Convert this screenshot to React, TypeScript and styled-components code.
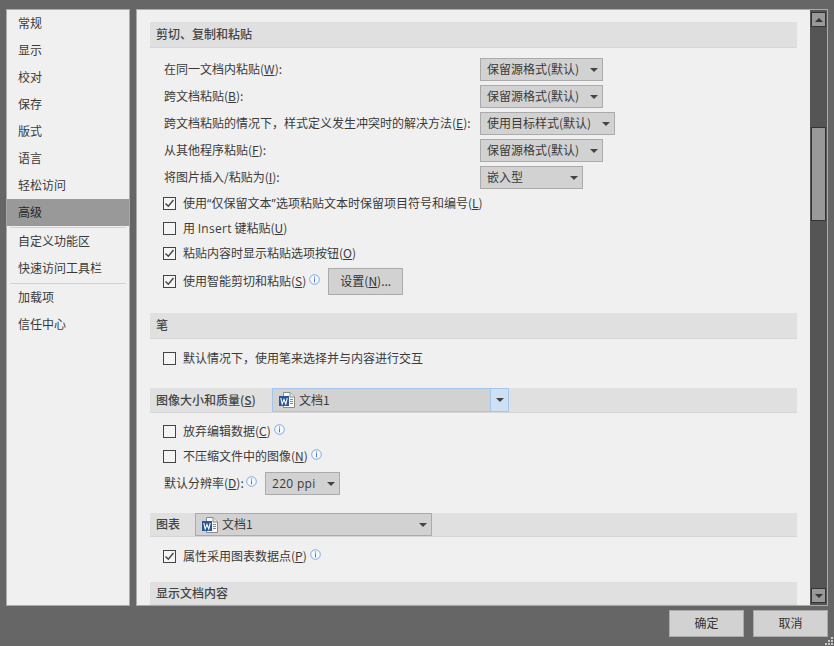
import styled, { createGlobalStyle } from 'styled-components';

const GlobalStyle = createGlobalStyle`
  html, body {
    margin: 0;
    padding: 0;
    background: #666666;
  }
  body {
    font-family: "Noto Sans CJK SC", "Liberation Sans", sans-serif;
    font-size: 12px;
    color: #3a3a3a;
  }
`;

const Dialog = styled.div`
  position: relative;
  width: 834px;
  height: 646px;
  box-sizing: border-box;
  padding: 9px 6px 0;
  background: #666666;
  overflow: hidden;
`;

const Body = styled.div`
  display: flex;
  gap: 6px;
  height: 597px;
`;

const Sidebar = styled.nav`
  width: 124px;
  box-sizing: border-box;
  background: #f0f0f0;
  border: 1px solid #ababab;
`;

const NavItem = styled.div<{ $active?: boolean }>`
  height: 27px;
  line-height: 25px;
  padding-left: 11px;
  background: ${p => (p.$active ? '#999999' : 'transparent')};
  color: ${p => (p.$active ? '#262626' : '#3a3a3a')};
`;

const NavDivider = styled.div`
  height: 1px;
  margin: 1px 3px 0;
  background: #d0d0d0;
`;

const Panel = styled.div`
  flex: 1;
  display: flex;
  box-sizing: border-box;
  background: #f0f0f0;
  border: 1px solid #ababab;
  overflow: hidden;
`;

const Content = styled.div`
  flex: 1;
  padding: 12px 13px 0;
  overflow: hidden;
`;

const SectionHeader = styled.div<{ $top?: number; $height?: number }>`
  display: flex;
  align-items: center;
  height: ${p => p.$height ?? 26}px;
  box-sizing: border-box;
  margin-top: ${p => p.$top ?? 0}px;
  padding-left: 6px;
  background: #e0e0e0;
  border-bottom: 1px solid #d6d6d6;
  font-weight: 500;
  color: #444444;
`;

const HeaderLabel = styled.span<{ $width?: number }>`
  width: ${p => (p.$width ? `${p.$width}px` : 'auto')};
  flex: none;
  padding-bottom: 2px;
`;

const FieldStack = styled.div`
  display: flex;
  flex-direction: column;
  gap: 4px;
  margin-top: 10px;
  padding-left: 14px;
`;

const FieldRow = styled.div`
  display: flex;
  align-items: center;
  height: 23px;
`;

const FieldLabel = styled.span<{ $width?: number }>`
  width: ${p => (p.$width ? `${p.$width}px` : 'auto')};
  flex: none;
  padding-bottom: 2px;
  white-space: nowrap;
`;

const Combo = styled.div<{ $width: number; $tall?: boolean; $active?: boolean; $left?: number }>`
  display: flex;
  align-items: center;
  justify-content: space-between;
  width: ${p => p.$width}px;
  height: ${p => (p.$tall ? '100%' : '23px')};
  box-sizing: border-box;
  flex: none;
  margin-left: ${p => p.$left ?? 0}px;
  padding: 0 ${p => (p.$active ? '0' : '4px')} 0 6px;
  background: #d2d2d2;
  border: 1px solid ${p => (p.$active ? '#a3c6ea' : '#ababab')};
  font-weight: 400;
  color: #3a3a3a;
  white-space: nowrap;
`;

const ComboText = styled.span`
  padding-bottom: 2px;
`;

const ComboValue = styled.span`
  display: flex;
  align-items: center;
  gap: 4px;
`;

const Latin = styled.span`
  font-family: "Open Sans", "Liberation Sans", sans-serif;
  letter-spacing: 0.3px;
`;

const Arrow = styled.span`
  width: 0;
  height: 0;
  border-left: 4px solid transparent;
  border-right: 4px solid transparent;
  border-top: 4px solid #444444;
`;

const ArrowButton = styled.span`
  display: flex;
  align-items: center;
  justify-content: center;
  align-self: stretch;
  width: 17px;
  background: #cde0f4;
  border-left: 1px solid #a3c6ea;
`;

const CheckRow = styled.div<{ $top?: number; $height?: number }>`
  display: flex;
  align-items: center;
  gap: 7px;
  height: ${p => p.$height ?? 25}px;
  margin-top: ${p => p.$top ?? 0}px;
  padding-left: 13px;
  white-space: nowrap;
`;

const CheckText = styled.span`
  padding-bottom: 2px;
`;

const Box = styled.span`
  display: flex;
  align-items: center;
  justify-content: center;
  width: 13px;
  height: 13px;
  box-sizing: border-box;
  flex: none;
  background: #f5f5f5;
  border: 1px solid #444444;
`;

const Info = styled.svg`
  flex: none;
  width: 11px;
  height: 11px;
  margin: -5px 0 0 -4px;
`;

const PushButton = styled.button<{ $left?: number }>`
  width: 75px;
  height: 27px;
  box-sizing: border-box;
  margin: 0 0 0 ${p => p.$left ?? 0}px;
  padding: 0 0 2px;
  background: #d2d2d2;
  border: 1px solid #ababab;
  font: inherit;
  color: #333333;
`;

const Resolution = styled.div`
  display: flex;
  align-items: center;
  height: 23px;
  margin-top: 3px;
  padding-left: 14px;
  white-space: nowrap;
`;

const ScrollBar = styled.div`
  display: flex;
  flex-direction: column;
  align-items: center;
  width: 17px;
  box-sizing: border-box;
  padding: 2px 0;
  flex: none;
  background: #555555;
`;

const ScrollButton = styled.div`
  display: flex;
  align-items: center;
  justify-content: center;
  width: 15px;
  height: 15px;
  box-sizing: border-box;
  background: #999999;
  border: 1px solid #333333;
`;

const ScrollArrow = styled.span<{ $up?: boolean }>`
  width: 0;
  height: 0;
  border-left: 4px solid transparent;
  border-right: 4px solid transparent;
  border-${p => (p.$up ? 'bottom' : 'top')}: 4px solid #333333;
`;

const ScrollThumb = styled.div`
  width: 15px;
  height: 94px;
  box-sizing: border-box;
  margin-top: 100px;
  margin-bottom: auto;
  background: #999999;
  border: 1px solid #333333;
`;

const Footer = styled.div`
  display: flex;
  justify-content: flex-end;
  gap: 9px;
  padding-top: 4px;
`;

const Grip = styled.svg`
  position: absolute;
  right: 1px;
  bottom: 1px;
  width: 8px;
  height: 8px;
`;

const CheckMark = () => (
  <svg width="11" height="11" viewBox="0 0 11 11">
    <path d="M1.5 5.5 L4.3 8.3 L9.5 2" fill="none" stroke="#444444" strokeWidth="1.4" />
  </svg>
);

const InfoIcon = () => (
  <Info viewBox="0 0 11 11">
    <circle cx="5.5" cy="5.5" r="4.8" fill="#f5f8fc" stroke="#7fa8de" strokeWidth="1" />
    <rect x="5" y="2.4" width="1" height="1.2" fill="#4f7fc0" />
    <rect x="5" y="4.4" width="1" height="4" fill="#4f7fc0" />
  </Info>
);

const WordIcon = () => (
  <svg width="16" height="16" viewBox="0 0 16 16">
    <path d="M4.5 0.5 H11 L15.5 5 V15.5 H4.5 Z" fill="#fafafa" stroke="#8a8a8a" />
    <path d="M11 0.5 V5 H15.5" fill="#e8e8e8" stroke="#8a8a8a" />
    <rect x="0" y="4" width="10" height="10" fill="#2b579a" />
    <path d="M1.8 6 L3.2 12 L5 7.5 L6.8 12 L8.2 6" fill="none" stroke="#ffffff" strokeWidth="1.1" />
    <path d="M11 7.5 H14 M11 9.5 H14 M11 11.5 H14" stroke="#8a8a8a" />
  </svg>
);

type CheckProps = {
  checked?: boolean;
  label: React.ReactNode;
  children?: React.ReactNode;
  top?: number;
  height?: number;
};

const Check = ({ checked, label, children, top, height }: CheckProps) => (
  <CheckRow $top={top} $height={height}>
    <Box>{checked && <CheckMark />}</Box>
    <CheckText>{label}</CheckText>
    {children}
  </CheckRow>
);

const navGroups = [
  ['常规', '显示', '校对', '保存', '版式', '语言', '轻松访问', '高级'],
  ['自定义功能区', '快速访问工具栏'],
  ['加载项', '信任中心'],
];

const pasteFields = [
  { label: '在同一文档内粘贴', key: 'W', value: '保留源格式(默认)', width: 123 },
  { label: '跨文档粘贴', key: 'B', value: '保留源格式(默认)', width: 123 },
  { label: '跨文档粘贴的情况下，样式定义发生冲突时的解决方法', key: 'E', value: '使用目标样式(默认)', width: 135 },
  { label: '从其他程序粘贴', key: 'F', value: '保留源格式(默认)', width: 123 },
  { label: '将图片插入/粘贴为', key: 'I', value: '嵌入型', width: 103 },
];

export default function App() {
  return (
    <>
      <GlobalStyle />
      <Dialog>
        <Body>
          <Sidebar>
            {navGroups.map((group, i) => (
              <div key={i}>
                {i > 0 && <NavDivider />}
                {group.map(name => (
                  <NavItem key={name} $active={name === '高级'}>{name}</NavItem>
                ))}
              </div>
            ))}
          </Sidebar>
          <Panel>
            <Content>
              <SectionHeader><HeaderLabel>剪切、复制和粘贴</HeaderLabel></SectionHeader>
              <FieldStack>
                {pasteFields.map(f => (
                  <FieldRow key={f.key}>
                    <FieldLabel $width={316}>{f.label}(<u>{f.key}</u>):</FieldLabel>
                    <Combo $width={f.width}>
                      <ComboText>{f.value}</ComboText>
                      <Arrow />
                    </Combo>
                  </FieldRow>
                ))}
              </FieldStack>
              <Check
                checked
                top={2}
                label={<>使用<Latin>“</Latin>仅保留文本<Latin>”</Latin>选项粘贴文本时保留项目符号和编号(<u>L</u>)</>}
              />
              <Check label={<>用 <Latin>Insert</Latin> 键粘贴(<u>U</u>)</>} />
              <Check checked label={<>粘贴内容时显示粘贴选项按钮(<u>O</u>)</>} />
              <Check checked top={2} height={27} label={<>使用智能剪切和粘贴(<u>S</u>)</>}>
                <InfoIcon />
                <PushButton $left={1}>设置(<u>N</u>)...</PushButton>
              </Check>

              <SectionHeader $top={18}><HeaderLabel>笔</HeaderLabel></SectionHeader>
              <Check top={7} label="默认情况下，使用笔来选择并与内容进行交互" />

              <SectionHeader $top={17} $height={25}>
                <HeaderLabel $width={116}>图像大小和质量(<u>S</u>)</HeaderLabel>
                <Combo $width={237} $tall $active>
                  <ComboValue><WordIcon /><ComboText>文档1</ComboText></ComboValue>
                  <ArrowButton><Arrow /></ArrowButton>
                </Combo>
              </SectionHeader>
              <Check top={6} label={<>放弃编辑数据(<u>C</u>)</>}><InfoIcon /></Check>
              <Check label={<>不压缩文件中的图像(<u>N</u>)</>}><InfoIcon /></Check>
              <Resolution>
                <FieldLabel $width={86}>默认分辨率(<u>D</u>):</FieldLabel>
                <InfoIcon />
                <Combo $width={75} $left={8}>
                  <ComboText><Latin>220 ppi</Latin></ComboText>
                  <Arrow />
                </Combo>
              </Resolution>

              <SectionHeader $top={18} $height={24}>
                <HeaderLabel $width={39}>图表</HeaderLabel>
                <Combo $width={237} $tall>
                  <ComboValue><WordIcon /><ComboText>文档1</ComboText></ComboValue>
                  <Arrow />
                </Combo>
              </SectionHeader>
              <Check checked top={7} label={<>属性采用图表数据点(<u>P</u>)</>}><InfoIcon /></Check>
              <SectionHeader $top={13} $height={23}><HeaderLabel>显示文档内容</HeaderLabel></SectionHeader>
            </Content>
            <ScrollBar>
              <ScrollButton><ScrollArrow $up /></ScrollButton>
              <ScrollThumb />
              <ScrollButton><ScrollArrow /></ScrollButton>
            </ScrollBar>
          </Panel>
        </Body>
        <Footer>
          <PushButton>确定</PushButton>
          <PushButton>取消</PushButton>
        </Footer>
        <Grip viewBox="0 0 8 8">
          <path d="M6 0h2v2H6zM3 3h2v2H3zM6 3h2v2H6zM0 6h2v2H0zM3 6h2v2H3zM6 6h2v2H6z" fill="#c8c8c8" />
        </Grip>
      </Dialog>
    </>
  );
}
